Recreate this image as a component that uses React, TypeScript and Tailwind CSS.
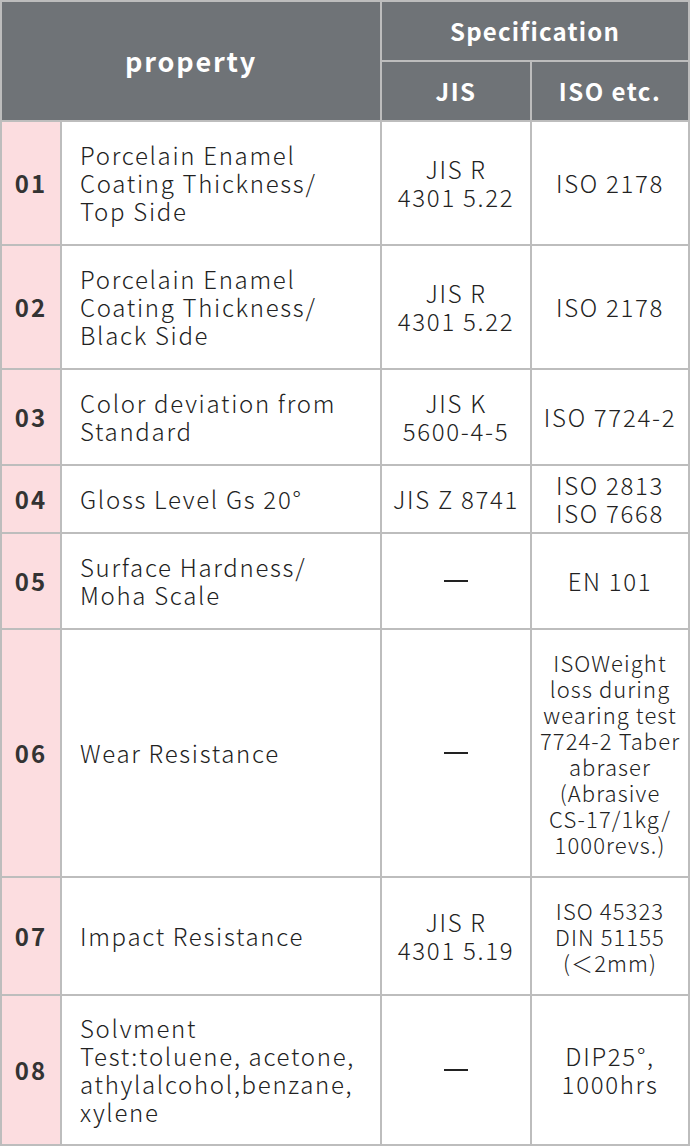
const rows = [
  {
    no: '01',
    h: 'h-[122px]',
    property: ['Porcelain Enamel', 'Coating Thickness/', 'Top Side'],
    jis: ['JIS R', '4301 5.22'],
    iso: ['ISO 2178'],
  },
  {
    no: '02',
    h: 'h-[122px]',
    property: ['Porcelain Enamel', 'Coating Thickness/', 'Black Side'],
    jis: ['JIS R', '4301 5.22'],
    iso: ['ISO 2178'],
  },
  {
    no: '03',
    h: 'h-[94px]',
    property: ['Color deviation from', 'Standard'],
    jis: ['JIS K', '5600-4-5'],
    iso: ['ISO 7724-2'],
  },
  {
    no: '04',
    h: 'h-[66px]',
    property: ['Gloss Level Gs 20°'],
    jis: ['JIS Z 8741'],
    iso: ['ISO 2813', 'ISO 7668'],
  },
  {
    no: '05',
    h: 'h-[94px]',
    property: ['Surface Hardness/', 'Moha Scale'],
    jis: null,
    iso: ['EN 101'],
  },
  {
    no: '06',
    h: 'h-[246px]',
    property: ['Wear Resistance'],
    jis: null,
    iso: ['ISOWeight', 'loss during', 'wearing test', '7724-2 Taber', 'abraser', '(Abrasive', 'CS-17/1kg/', '1000revs.)'],
    small: true,
  },
  {
    no: '07',
    h: 'h-[116px]',
    property: ['Impact Resistance'],
    jis: ['JIS R', '4301 5.19'],
    iso: ['ISO 45323', 'DIN 51155', '(＜2mm)'],
    small: true,
  },
  {
    no: '08',
    h: 'h-[148px]',
    property: ['Solvment', 'Test:toluene, acetone,', 'athylalcohol,benzane,', 'xylene'],
    jis: null,
    iso: ['DIP25°,', '1000hrs'],
  },
]

function Lines({ lines }: { lines: string[] }) {
  return (
    <>
      {lines.map((l, i) => (
        <div key={i} className="whitespace-nowrap">{l}</div>
      ))}
    </>
  )
}

export default function App() {
  return (
    <div className="w-[690px] bg-white" style={{ fontFamily: '"Noto Sans CJK JP", "Noto Sans", sans-serif' }}>
      <table className="w-[690px] table-fixed border-separate border-spacing-[2px] bg-[#bdbdbd] text-[#222]">
        <colgroup>
          <col className="w-[58px]" />
          <col className="w-[318px]" />
          <col className="w-[148px]" />
          <col className="w-[156px]" />
        </colgroup>
        <thead>
          <tr className="h-[58px]">
            <th
              colSpan={2}
              rowSpan={2}
              className="bg-[#6f7377] p-0 text-center align-middle text-[27px] font-bold tracking-[1.8px] text-white"
            >
              property
            </th>
            <th colSpan={2} className="bg-[#6f7377] p-0 text-center align-middle text-[24px] font-bold tracking-[1.2px] text-white">
              Specification
            </th>
          </tr>
          <tr className="h-[58px]">
            <th className="bg-[#6f7377] p-0 text-center align-middle text-[24px] font-bold tracking-[1.5px] text-white">JIS</th>
            <th className="bg-[#6f7377] p-0 text-center align-middle text-[24px] font-bold tracking-[1.5px] text-white">ISO etc.</th>
          </tr>
        </thead>
        <tbody>
          {rows.map((r) => (
            <tr key={r.no} className={r.h}>
              <td className="bg-[#fcdde0] p-0 text-center align-middle text-[24px] font-bold tracking-[2px] text-[#333]">{r.no}</td>
              <td className="bg-white py-0 pl-[18px] pr-0 align-middle text-[24px] leading-[28px] font-light tracking-[1.7px]">
                <Lines lines={r.property} />
              </td>
              <td className="bg-white p-0 text-center align-middle text-[24px] leading-[28px] font-light tracking-[1.7px]">
                {r.jis ? <Lines lines={r.jis} /> : <div className="mx-auto h-[2px] w-[24px] bg-[#222]" />}
              </td>
              <td
                className={`bg-white p-0 text-center align-middle font-light ${
                  r.small ? 'text-[22px] leading-[26px] tracking-[1.1px]' : 'text-[24px] leading-[28px] tracking-[1.7px]'
                }`}
              >
                <Lines lines={r.iso} />
              </td>
            </tr>
          ))}
        </tbody>
      </table>
    </div>
  )
}
